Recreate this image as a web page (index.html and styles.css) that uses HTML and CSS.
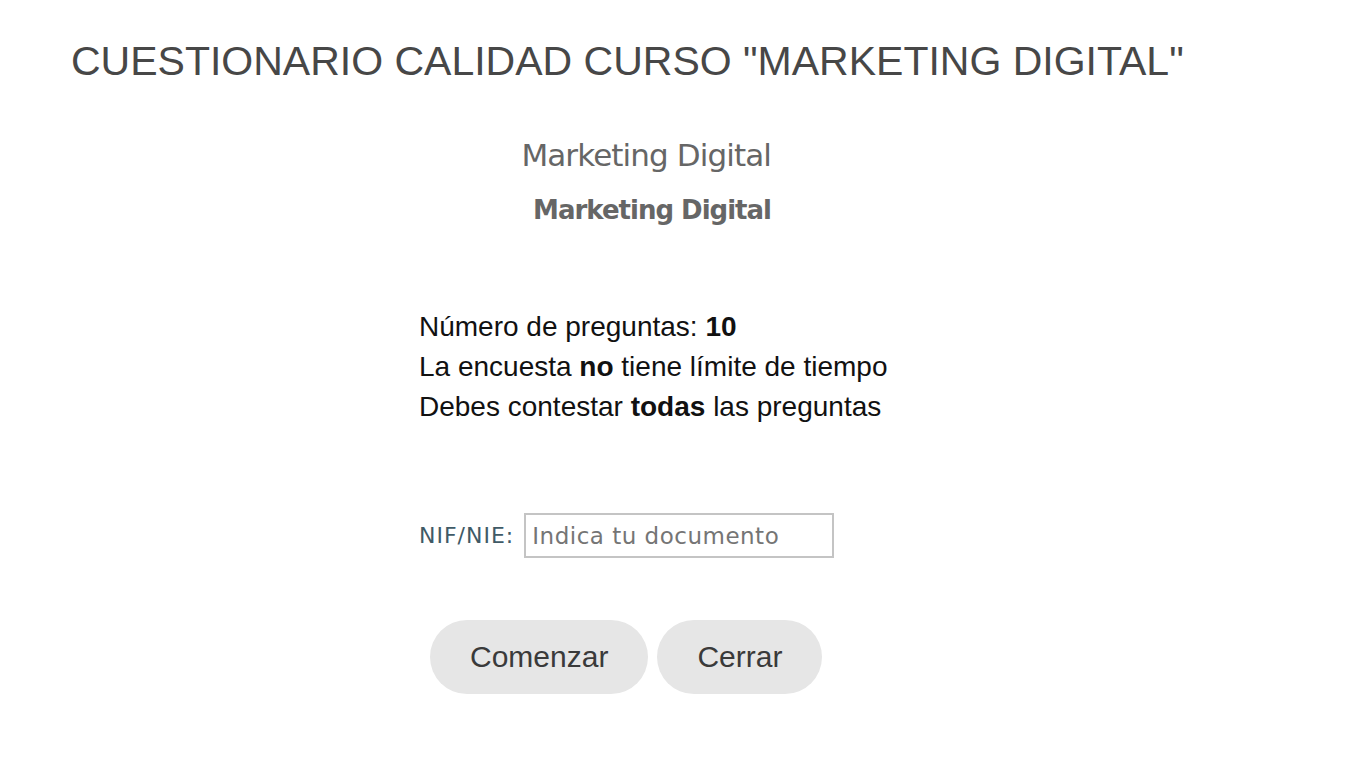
FILE: index.html
```html
<!DOCTYPE html>
<html lang="es">
<head>
    <meta charset="UTF-8">
    <meta name="viewport" content="width=device-width, initial-scale=1.0">
    <title>Cuestionario calidad</title>
    <link rel="stylesheet" href="styles.css">
</head>
<body>
    <h1 class="page-title">CUESTIONARIO CALIDAD CURSO "MARKETING DIGITAL"</h1>
    <div class="course">
        <h2 class="course-name">Marketing Digital</h2>
        <h3 class="course-sub">Marketing Digital</h3>
    </div>
    <div class="survey">
        <div class="info">
            <p>Número de preguntas: <b>10</b></p>
            <p>La encuesta <b>no</b> tiene límite de tiempo</p>
            <p>Debes contestar <b>todas</b> las preguntas</p>
        </div>
        <form class="id-form">
            <label for="nif">NIF/NIE:</label>
            <input type="text" id="nif" placeholder="Indica tu documento">
        </form>
        <div class="actions">
            <button type="button" class="btn btn-start">Comenzar</button>
            <button type="button" class="btn btn-close">Cerrar</button>
        </div>
    </div>
</body>
</html>
```

FILE: styles.css
```css
body {
    margin: 0;
    background-color: #fff;
    font-family: "Liberation Sans", Arial, sans-serif;
}
.page-title {
    margin: 0;
    padding: 36px 0 0 71px;
    font-size: 41px;
    font-weight: normal;
    color: #474747;
    line-height: 50px;
}
.course {
    width: 500px;
    margin: 0 0 0 271px;
    text-align: right;
    color: #666;
}
.course-name {
    margin: 0;
    padding-top: 44px;
    font-family: "DejaVu Sans", Verdana, sans-serif;
    font-weight: normal;
    font-size: 31px;
    line-height: 50px;
    letter-spacing: -0.9px;
}
.course-sub {
    margin: 0;
    font-family: "DejaVu Sans", "Trebuchet MS", sans-serif;
    font-weight: bold;
    font-size: 26px;
    line-height: 60px;
    letter-spacing: -1px;
}
.survey {
    margin-left: 419px;
    padding-top: 67px;
}
.info p {
    margin: 0;
    font-size: 28px;
    line-height: 40px;
    color: #111;
}
.id-form {
    display: flex;
    align-items: center;
    gap: 10px;
    margin-top: 86px;
}
.id-form label {
    font-family: "DejaVu Sans", Verdana, sans-serif;
    font-size: 22px;
    letter-spacing: 1px;
    color: #3f5a66;
}
.id-form input {
    width: 310px;
    height: 45px;
    box-sizing: border-box;
    border: 2px solid #c4c4c4;
    padding: 0 6px;
    font-family: "DejaVu Sans", Verdana, sans-serif;
    font-size: 23px;
    letter-spacing: 0.5px;
}
.id-form input::placeholder {
    color: #757575;
}
.actions {
    display: flex;
    gap: 9px;
    margin-top: 62px;
    margin-left: 11px;
}
.btn {
    height: 74px;
    padding: 0 40px;
    border: none;
    border-radius: 37px;
    background-color: #e6e6e6;
    color: #3a3a3a;
    font-family: "Liberation Sans", Arial, sans-serif;
    font-size: 30px;
    cursor: pointer;
}
```
